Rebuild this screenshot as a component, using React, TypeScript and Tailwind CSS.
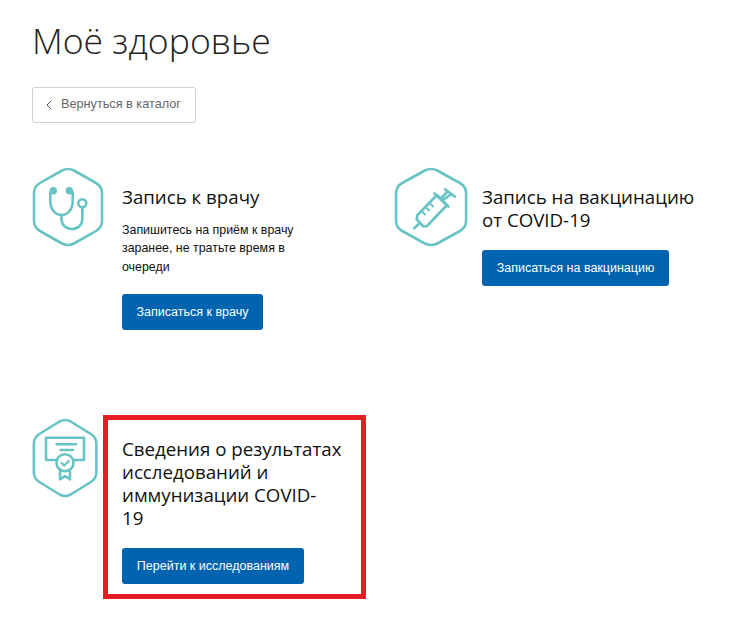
import { ChevronLeft } from 'lucide-react'
import type { ReactNode } from 'react'

const TEAL = '#68c3c5'

// Rounded hexagon outline shared by all service icons
function HexIcon({ scaleX = 1, children }: { scaleX?: number; children: ReactNode }) {
  return (
    <svg width="76" height="80" viewBox="0 0 76 80" fill="none" stroke={TEAL} strokeWidth="2.6" strokeLinecap="round" strokeLinejoin="round" className="shrink-0">
      <path
        transform={`scale(${scaleX} 1)`}
        vectorEffect="non-scaling-stroke"
        d="M30 3.5 Q36 0.6 42 3.5 L64 16 Q70 19.5 70 26 V54 Q70 60.5 64 64 L42 76.5 Q36 79.4 30 76.5 L8 64 Q2 60.5 2 54 V26 Q2 19.5 8 16 Z"
      />
      {children}
    </svg>
  )
}

function Stethoscope() {
  return (
    <HexIcon>
      <circle cx="21.3" cy="23.7" r="2.4" fill={TEAL} />
      <circle cx="37.3" cy="23.7" r="2.4" fill={TEAL} />
      <circle cx="50.3" cy="36.3" r="4" />
      <path d="M18.3 25 V34 C18.3 42 23 48 29.5 48 C36 48 40.7 42 40.7 34 V25" />
      <path d="M29.5 48 V52 C29.5 58 34 62 40 62 C46 62 50.3 58 50.3 52 V40.5" />
    </HexIcon>
  )
}

function Syringe() {
  return (
    <HexIcon scaleX={1.03}>
      <path d="M20.3 61.3 L26 55.8" />
      <path d="M22.7 52.5 L29.5 59.5 L33 59 L53 38 L43 28 L23.5 48 Z" />
      <path d="M40.3 26.3 L54.5 39.7" />
      <path d="M49 33 L56 28" />
      <path d="M51 22.3 L61 29.7" />
      <path d="M53 25 L47.5 31" />
      <path d="M28.5 45 L31 47.5 M32.5 41 L35 43.5 M36.5 37 L39 39.5" strokeWidth="2" />
    </HexIcon>
  )
}

function Certificate() {
  return (
    <HexIcon scaleX={0.92}>
      <path d="M24 42 H14 V19.7 H52 V42 H42" />
      <path d="M24.7 26.3 H44" />
      <path d="M28.7 32 H41" />
      <circle cx="33" cy="44.7" r="8.5" />
      <path d="M29.7 45 L32.3 47.6 L36.8 43" strokeWidth="2.2" />
      <path d="M28 53 V61.3 L33 58 L38 61.3 V53" />
    </HexIcon>
  )
}

function BlueButton({ label, width }: { label: string; width: string }) {
  return (
    <button className={`mt-[19px] block h-9 ${width} rounded-[3px] bg-[#0063b0] text-center font-['Liberation_Sans',sans-serif] text-[12.5px] text-white`}>
      {label}
    </button>
  )
}

export default function App() {
  return (
    <div className="h-[617px] w-[738px] overflow-hidden bg-white pt-[17px] pl-8 text-[#111]">
      <h1 className="font-['Open_Sans',sans-serif] text-[35.6px] leading-[46px] font-light text-[#222]">
        Моё здоровье
      </h1>

      <button className="mt-[24px] flex h-[36px] w-[164px] items-center rounded-[3px] border border-[#cfcfcf] pl-[8px] font-['Liberation_Sans',sans-serif] text-[12.7px] text-[#666]">
        <ChevronLeft size={16} strokeWidth={1.5} className="mr-[4px] text-[#555]" />
        Вернуться в каталог
      </button>

      <div className="mt-[44px] flex">
        <div className="flex w-[362px]">
          <Stethoscope />
          <div className="ml-[14px] w-[221px] pt-[18px]">
            <h2 className="font-['Open_Sans',sans-serif] text-[18.7px] leading-[23px]">Запись к врачу</h2>
            <p className="mt-[13px] h-[54px] w-[200px] font-['Liberation_Sans',sans-serif] text-[12.4px] leading-[18.3px]">
              Запишитесь на приём к врачу заранее, не тратьте время в очереди
            </p>
            <BlueButton label="Записаться к врачу" width="w-[141px]" />
          </div>
        </div>

        <div className="flex">
          <Syringe />
          <div className="ml-[12px] w-[221px] pt-[18px]">
            <h2 className="font-['Open_Sans',sans-serif] text-[18.7px] leading-[23px]">Запись на вакцинацию от COVID-19</h2>
            <BlueButton label="Записаться на вакцинацию" width="w-[187px]" />
          </div>
        </div>
      </div>

      <div className="mt-[88px] flex">
        <Certificate />
        <div className="relative ml-[14px] w-[221px] pt-[19px]">
          <h2 className="font-['Open_Sans',sans-serif] text-[18.7px] leading-[23px]">
            Сведения о результатах исследований и иммунизации COVID-
            <br />
            19
          </h2>
          <BlueButton label="Перейти к исследованиям" width="w-[182px]" />
          {/* red annotation frame drawn over the card */}
          <div className="absolute top-[-3px] left-[-19px] h-[184px] w-[263px] border-[5px] border-[#e91c24]" />
        </div>
      </div>
    </div>
  )
}
